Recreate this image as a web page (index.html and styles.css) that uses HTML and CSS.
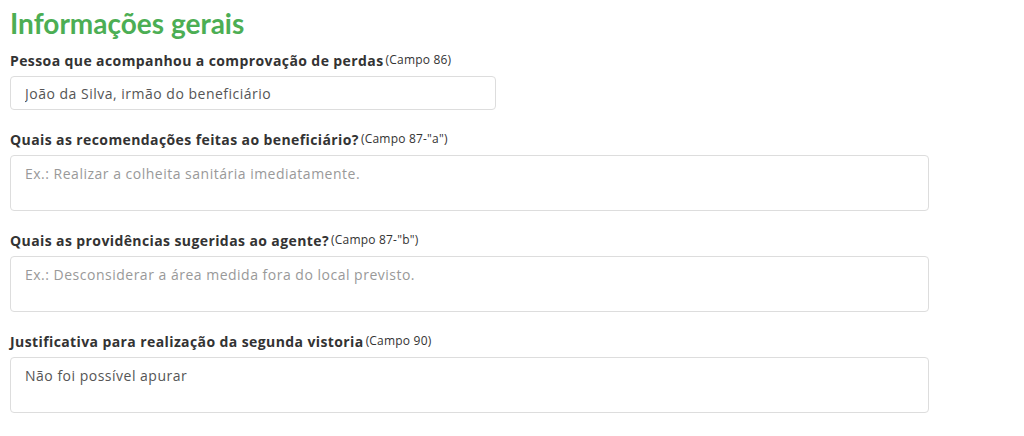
FILE: index.html
```html
<!DOCTYPE html>
<html>
<head>
  <meta charset="UTF-8">
  <title>Informações gerais</title>
  <meta name="viewport" content="width=device-width, initial-scale=1">
  <link rel="stylesheet" href="styles.css">
</head>
<body>
  <h2>Informações gerais</h2>
  <form>
    <div class="field">
      <label>Pessoa que acompanhou a comprovação de perdas<small>(Campo 86)</small></label>
      <input type="text" class="short" value="João da Silva, irmão do beneficiário">
    </div>

    <div class="field">
      <label>Quais as recomendações feitas ao beneficiário?<small>(Campo 87-"a")</small></label>
      <textarea placeholder="Ex.: Realizar a colheita sanitária imediatamente."></textarea>
    </div>

    <div class="field">
      <label>Quais as providências sugeridas ao agente?<small>(Campo 87-"b")</small></label>
      <textarea placeholder="Ex.: Desconsiderar a área medida fora do local previsto."></textarea>
    </div>

    <div class="field">
      <label>Justificativa para realização da segunda vistoria<small>(Campo 90)</small></label>
      <textarea>Não foi possível apurar</textarea>
    </div>
  </form>
</body>
</html>
```

FILE: styles.css
```css
body { font-family: "Open Sans", Lato, sans-serif; margin: 0; padding: 6px 10px; background: white; color: #333; }
h2 { font-family: Lato, sans-serif; color: #4cae54; font-size: 28px; line-height: 34px; font-weight: 700; margin: 0 0 11px; }
.field { margin-bottom: 20px; }
label { display: block; font-size: 14px; line-height: 17px; font-weight: 700; letter-spacing: 0.4px; color: #333; margin-bottom: 7px; }
label small { font-size: 12px; font-weight: 400; letter-spacing: 0.2px; vertical-align: 2px; margin-left: 2px; }
input, textarea { display: block; box-sizing: border-box; font-family: inherit; font-size: 14px; letter-spacing: 0.5px; color: #555; border: 1px solid #ddd; border-radius: 4px; padding: 0 14px; background: white; }
input.short { width: 486px; height: 34px; }
textarea { width: 919px; height: 56px; padding-top: 8px; resize: none; line-height: 19px; }
textarea::placeholder { color: #999; }
```
